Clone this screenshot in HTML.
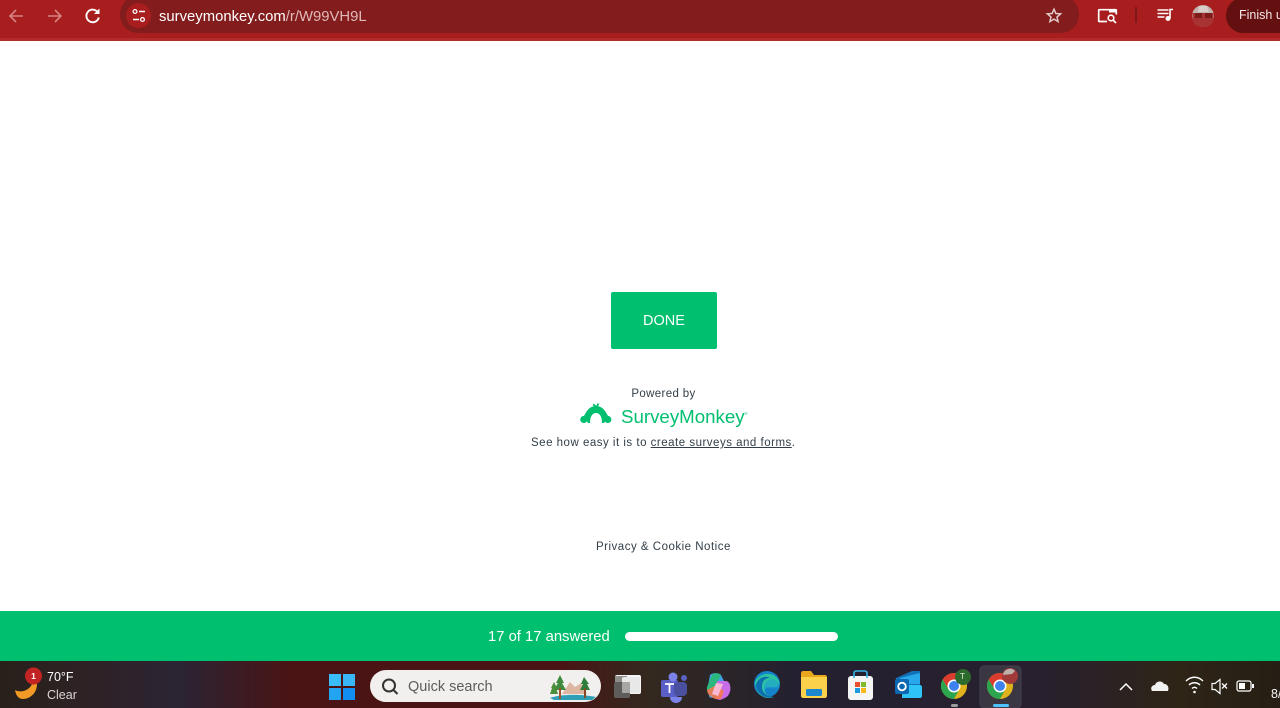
<!DOCTYPE html>
<html><head><meta charset="utf-8"><style>
html,body{margin:0;padding:0;width:1280px;height:708px;overflow:hidden;background:#fff;font-family:"Liberation Sans",sans-serif}
.a{position:absolute}
.t{position:absolute;white-space:nowrap;line-height:1}
svg{position:absolute;overflow:visible}
</style></head><body>
<div class="a" style="left:0;top:0;width:1280px;height:41px;background:#a81e1e"></div>
<div class="a" style="left:0;top:38px;width:1280px;height:3px;background:#b32a2a"></div>
<div class="a" style="left:120px;top:-4px;width:959px;height:37px;background:#831c1c;border-radius:18px"></div>
<div class="a" style="left:126px;top:3px;width:25px;height:25px;background:#a81e1e;border-radius:50%"></div>
<svg style="left:0;top:0" width="1280" height="41" fill="none">
<path d="M23 16H10M16 10l-6 6 6 6" stroke="#d48282" stroke-width="1.600"/>
<path d="M48 16h13M55 10l6 6-6 6" stroke="#d48282" stroke-width="1.600"/>
<path d="M98 12.500a6.300 6.300 0 1 0 .8 5" stroke="#fff" stroke-width="1.900"/><path d="M99.500 8.500v5.500H94z" fill="#fff"/>
<circle cx="135" cy="11.500" r="1.900" stroke="#fff" stroke-width="1.300"/><path d="M139 11.500h6M133 19.500h6" stroke="#fff" stroke-width="1.400"/><circle cx="142.500" cy="19.500" r="1.900" stroke="#fff" stroke-width="1.300"/>
<path d="M1054 9.200l1.900 4.300 4.700.4-3.600 3.100 1.100 4.600-4.100-2.500-4.100 2.500 1.100-4.600-3.600-3.100 4.700-.4z" stroke="#e3c9c9" stroke-width="1.500"/>
<path d="M1107 21.500h-7.500a.8.8 0 0 1-.8-.8V10.500a.8.8 0 0 1 .8-.8h16a.8.8 0 0 1 .8.8v4" stroke="#fff" stroke-width="1.700"/><path d="M1109 9.500h7v3h-7z" fill="#fff"/><circle cx="1111" cy="18" r="2.800" stroke="#fff" stroke-width="1.600"/><path d="M1113 20l3 3" stroke="#fff" stroke-width="1.700"/>
<path d="M1136 7v16" stroke="#7e1717" stroke-width="2"/>
<path d="M1157.500 10h11M1157.500 13.500h11M1157.500 17h7" stroke="#fff" stroke-width="1.500"/><circle cx="1168" cy="18.500" r="2.500" fill="#fff"/><path d="M1170 18.500V9.500h3" stroke="#fff" stroke-width="1.600"/>
<circle cx="1203" cy="16" r="11" fill="#c2b2ae"/><path d="M1192.500 13h21v6c0 5-5 8-10.500 8s-10.500-3-10.500-8z" fill="#a83333"/><rect x="1195" y="13" width="7" height="5" fill="#7d1a1a"/><rect x="1205" y="13" width="7" height="5" fill="#7d1a1a"/><path d="M1199 6h8l2 6h-11z" fill="#d9cdc9"/>
</svg>
<div class="t" style="left:159px;top:10px;font-size:14.850px;color:#fff">surveymonkey.com<span style="color:#e0b9b9">/r/W99VH9L</span></div>
<div class="a" style="left:1226px;top:-2px;width:80px;height:35px;background:#651010;border-radius:17px"></div>
<div class="t" style="left:1239px;top:9px;font-size:12.500px;color:#f3e6e6">Finish u</div>

<div class="a" style="left:611px;top:292px;width:106px;height:57px;background:#00bf6f;border-radius:2px"></div>
<div class="t" style="left:611px;top:314px;width:106px;text-align:center;font-size:14.500px;color:#fff">DONE</div>
<div class="t" style="left:0;top:389px;width:1327px;text-align:center;font-size:11.500px;color:#333e48;letter-spacing:.35px">Powered by</div>
<svg style="left:580px;top:403px" width="32" height="24" fill="#00bf6f">
<path d="M4 13C7 7 10 3 16 3c6 0 9 4 12 10l-4 7h-2c0-6-2-10-6-10s-6 4-6 10H8z"/>
<circle cx="3.800" cy="16.500" r="3.600"/><circle cx="27.800" cy="16.500" r="3.600"/>
<path d="M16 5c-.5-2-1.500-3-3-3.500M16 5l2.500-4.500" stroke="#00bf6f" stroke-width="1.800" fill="none"/>
</svg>
<div class="t" style="left:621px;top:408px;font-size:18.700px;color:#00bf6f">SurveyMonkey<sup style="font-size:4px;vertical-align:8px;line-height:0">®</sup></div>
<div class="t" style="left:531px;top:438px;font-size:11.500px;color:#333e48;letter-spacing:.5px">See how easy it is to <u>create surveys and forms</u>.</div>
<div class="t" style="left:596px;top:542px;font-size:11.500px;color:#333e48;letter-spacing:.5px">Privacy &amp; Cookie Notice</div>

<div class="a" style="left:0;top:611px;width:1280px;height:50px;background:#00bf6f"></div>
<div class="t" style="left:488px;top:630px;font-size:14.800px;color:#fff">17 of 17 answered</div>
<div class="a" style="left:625px;top:632px;width:213px;height:9px;background:#fff;border-radius:5px"></div>

<div class="a" style="left:0;top:661px;width:1280px;height:47px;background:linear-gradient(90deg,#27211a 0,#2f2226 90px,#2b2433 180px,#4a1414 290px,#4a1414 560px,#33291f 650px,#232031 800px,#28202e 1040px,#2e2517 1180px,#251e14 1280px)"></div>
<svg style="left:0;top:661px" width="1280" height="47" fill="none">
<path d="M15 29c5 3 14 1 17-6l5 0c0 9-7 15-14 15-4 0-7-3-8-9z" fill="#f29a25"/>
<circle cx="33.500" cy="15" r="8.500" fill="#c42323"/>
<path d="M329 13h12v12h-12z" fill="#38bdf8"/><path d="M343 13h12v12h-12z" fill="#38b6f5"/><path d="M329 27h12v12h-12z" fill="#22a4f0"/><path d="M343 27h12v12h-12z" fill="#128ef0"/>
</svg>
<div class="t" style="left:29px;top:672px;font-size:8.500px;font-weight:bold;color:#fff;width:9px;text-align:center">1</div>
<div class="t" style="left:47px;top:671px;font-size:12.500px;color:#fff">70°F</div>
<div class="t" style="left:47px;top:689px;font-size:12.500px;color:#d9d6d3">Clear</div>

<div class="a" style="left:370px;top:670px;width:231px;height:32px;background:#f2f0ee;border-radius:16px"></div>
<svg style="left:370px;top:670px" width="231" height="32" fill="none">
<circle cx="19" cy="15.500" r="6" stroke="#333" stroke-width="2"/><path d="M23.500 20l4 4" stroke="#333" stroke-width="2"/>
<path d="M180 28c10-4 32-4 46-1l-4 3h-38z" fill="#2f9fb5"/>
<path d="M192 24l8-12 5 5 6-4 6 11z" fill="#dcb6a0"/>
<path d="M190 5l-4 8h2l-4 7h12l-4-7h2z" fill="#3f8a3c"/><path d="M189 18h2v11h-2z" fill="#a0522d"/>
<path d="M214 7l-3 7h2l-3 6h10l-3-6h2z" fill="#2f7d3a"/><path d="M214 18h2v10h-2z" fill="#8a4a25"/>
<path d="M184 12l-3 6h1l-2 6h8l-2-6h1z" fill="#4b8f3d"/>
</svg>
<div class="t" style="left:408px;top:680px;font-size:14.500px;color:#5c5c5c">Quick search</div>

<svg style="left:600px;top:661px" width="480" height="47" fill="none">
<rect x="15" y="14" width="26" height="19" rx="2" fill="#f5f5f5"/><rect x="15" y="15" width="12" height="18" fill="#8f8d8b"/><rect x="14" y="21" width="16" height="16" rx="2" fill="#5f5d5c"/><rect x="22" y="16" width="18" height="16" rx="2" fill="#e8e8e8"/><rect x="22" y="21" width="8" height="11" fill="#a8a6a5"/>

<rect x="61" y="19" width="17" height="17" rx="2" fill="#5a5fc7"/><rect x="74" y="21" width="13" height="14" rx="4" fill="#4a4f9e"/><circle cx="73" cy="16" r="4.500" fill="#7b83eb"/><circle cx="84" cy="17" r="3" fill="#5a62c4"/><path d="M65 23h9M69.500 23v9" stroke="#fff" stroke-width="1.800"/><path d="M70 36h12c0 4-3 6-6 6s-6-2-6-6z" fill="#7b83eb"/>

<path d="M110 14c3-3 9-2 11 0l3 6-8 14c-2 4-8 4-7-1l-1-8z" fill="#3fa0e8"/><path d="M121 14c-3-3-9-2-10 2l-4 10c-1 4 3 7 6 4z" fill="#2ab87f"/><path d="M117 20h9c4 0 6 8 3 13-1 3-6 5-9 6l-4-1z" fill="#c86ce8"/><path d="M107 29c0 5 5 7 8 9h6l3-8-8-6z" fill="#f47a4e" opacity=".9"/><path d="M116 22l7 1-5 12-6-2z" fill="#f9b9d5"/>

<circle cx="167" cy="23" r="13" fill="#1483c9"/><path d="M155 21c3-9 19-12 24-1 1 4-1 6-5 6-5 0-8-1-9 2-1 5 4 8 9 8-7 3-18 0-19-15z" fill="#2bc3a0"/><path d="M156 25c0-6 8-12 14-8-6 0-8 4-8 9 0 6 6 10 12 10-8 3-17-3-18-11z" fill="#0e6fb0"/><path d="M164 25c1-5 6-8 11-6 4 2 5 5 4 8-3 1-9 0-11 0-2 0-3 2-4 4z" fill="#1f9fd3" opacity=".6"/>

<path d="M201 12c0-1 1-2 2-2h8l3 4h11c1 0 2 1 2 2v2h-26z" fill="#e8a71c"/><path d="M201 16h26v19c0 1-1 2-2 2h-22c-1 0-2-1-2-2z" fill="#fbd04a"/><rect x="206" y="28" width="16" height="7" rx="1.500" fill="#1a87cf"/>

<rect x="248" y="15" width="25" height="24" rx="3" fill="#f5f5f5"/><path d="M254 17v-5c0-1 1-2 2-2h9c1 0 2 1 2 2v5" stroke="#39b5e8" stroke-width="1.600"/><rect x="255" y="21" width="5" height="5" fill="#e8502f"/><rect x="261" y="21" width="5" height="5" fill="#7fba2c"/><rect x="255" y="27" width="5" height="5" fill="#1e9be0"/><rect x="261" y="27" width="5" height="5" fill="#fbb81c"/>

<path d="M296 17l16-7h8l0 14-24 0z" fill="#1170b8"/><path d="M300 17l20-5v11H300z" fill="#28a8ea"/><path d="M302 24h18c1 0 2 1 2 2v9c0 1-1 2-2 2h-18z" fill="#2ec4f5"/><rect x="295" y="18" width="14" height="15" rx="2" fill="#0c68b0"/><circle cx="302" cy="25.500" r="3.800" stroke="#fff" stroke-width="1.800"/>

<circle cx="354" cy="25" r="13" fill="#e0b31d"/><path d="M354 12a13 13 0 0 0-11.300 6.500l6 10.500 5.300-9h11.300A13 13 0 0 0 354 12z" fill="#da3d30"/><path d="M342.700 18.500a13 13 0 0 0 11.300 19.500l5-9h-10z" fill="#2da44e"/><circle cx="354" cy="25" r="6.500" fill="#fff"/><circle cx="354" cy="25" r="5" fill="#3d82ee"/>
<circle cx="363" cy="16" r="8" fill="#2d6a2d"/>
<rect x="351" y="43" width="7" height="3" rx="1.500" fill="#9e9e9e"/>

<rect x="380" y="5" width="41" height="42" rx="4" fill="#3a3743" stroke="#44414d"/>
<circle cx="400" cy="25" r="13" fill="#e0b31d"/><path d="M400 12a13 13 0 0 0-11.300 6.500l6 10.500 5.300-9h11.300A13 13 0 0 0 400 12z" fill="#da3d30"/><path d="M388.700 18.500a13 13 0 0 0 11.300 19.500l5-9h-10z" fill="#2da44e"/><circle cx="400" cy="25" r="6.500" fill="#fff"/><circle cx="400" cy="25" r="5" fill="#3d82ee"/>
<circle cx="410" cy="15" r="8" fill="#a33a3a"/><path d="M403 14a7 7 0 0 1 12-4l-3 3z" fill="#bdb1ad"/>
<rect x="393" y="43" width="16" height="3" rx="1.500" fill="#4cc2ff"/>
</svg>
<div class="t" style="left:960px;top:673px;font-size:8px;color:#e8f0e0">T</div>

<svg style="left:1100px;top:661px" width="180" height="47" fill="none">
<path d="M20 29l6-6 6 6" stroke="#fff" stroke-width="1.500"/>
<path d="M52 30c-2-3 0-6 3-6 1-4 7-5 9-1 3-.5 5.500 3 4 7z" fill="#f2f2f2"/>
<path d="M86 20c5-5 12-5 17 0M89 24c3-3 8-3 11 0M92 27.500c1.500-1.500 3.500-1.500 5 0" stroke="#fff" stroke-width="1.400"/><circle cx="94.500" cy="31" r="1.300" fill="#fff"/>
<path d="M112 22.500h3l5-4v14l-5-4h-3z" stroke="#fff" stroke-width="1.200"/><path d="M122 22.500l5 5M127 22.500l-5 5" stroke="#fff" stroke-width="1.300"/>
<rect x="137" y="20" width="14" height="10" rx="2" stroke="#fff" stroke-width="1.200"/><rect x="139" y="22" width="6" height="6" fill="#fff"/><rect x="152" y="23" width="2" height="4" fill="#fff"/>
</svg>
<div class="t" style="left:1271px;top:688px;font-size:12.500px;color:#f5f5f5">8/</div>
</body></html>
